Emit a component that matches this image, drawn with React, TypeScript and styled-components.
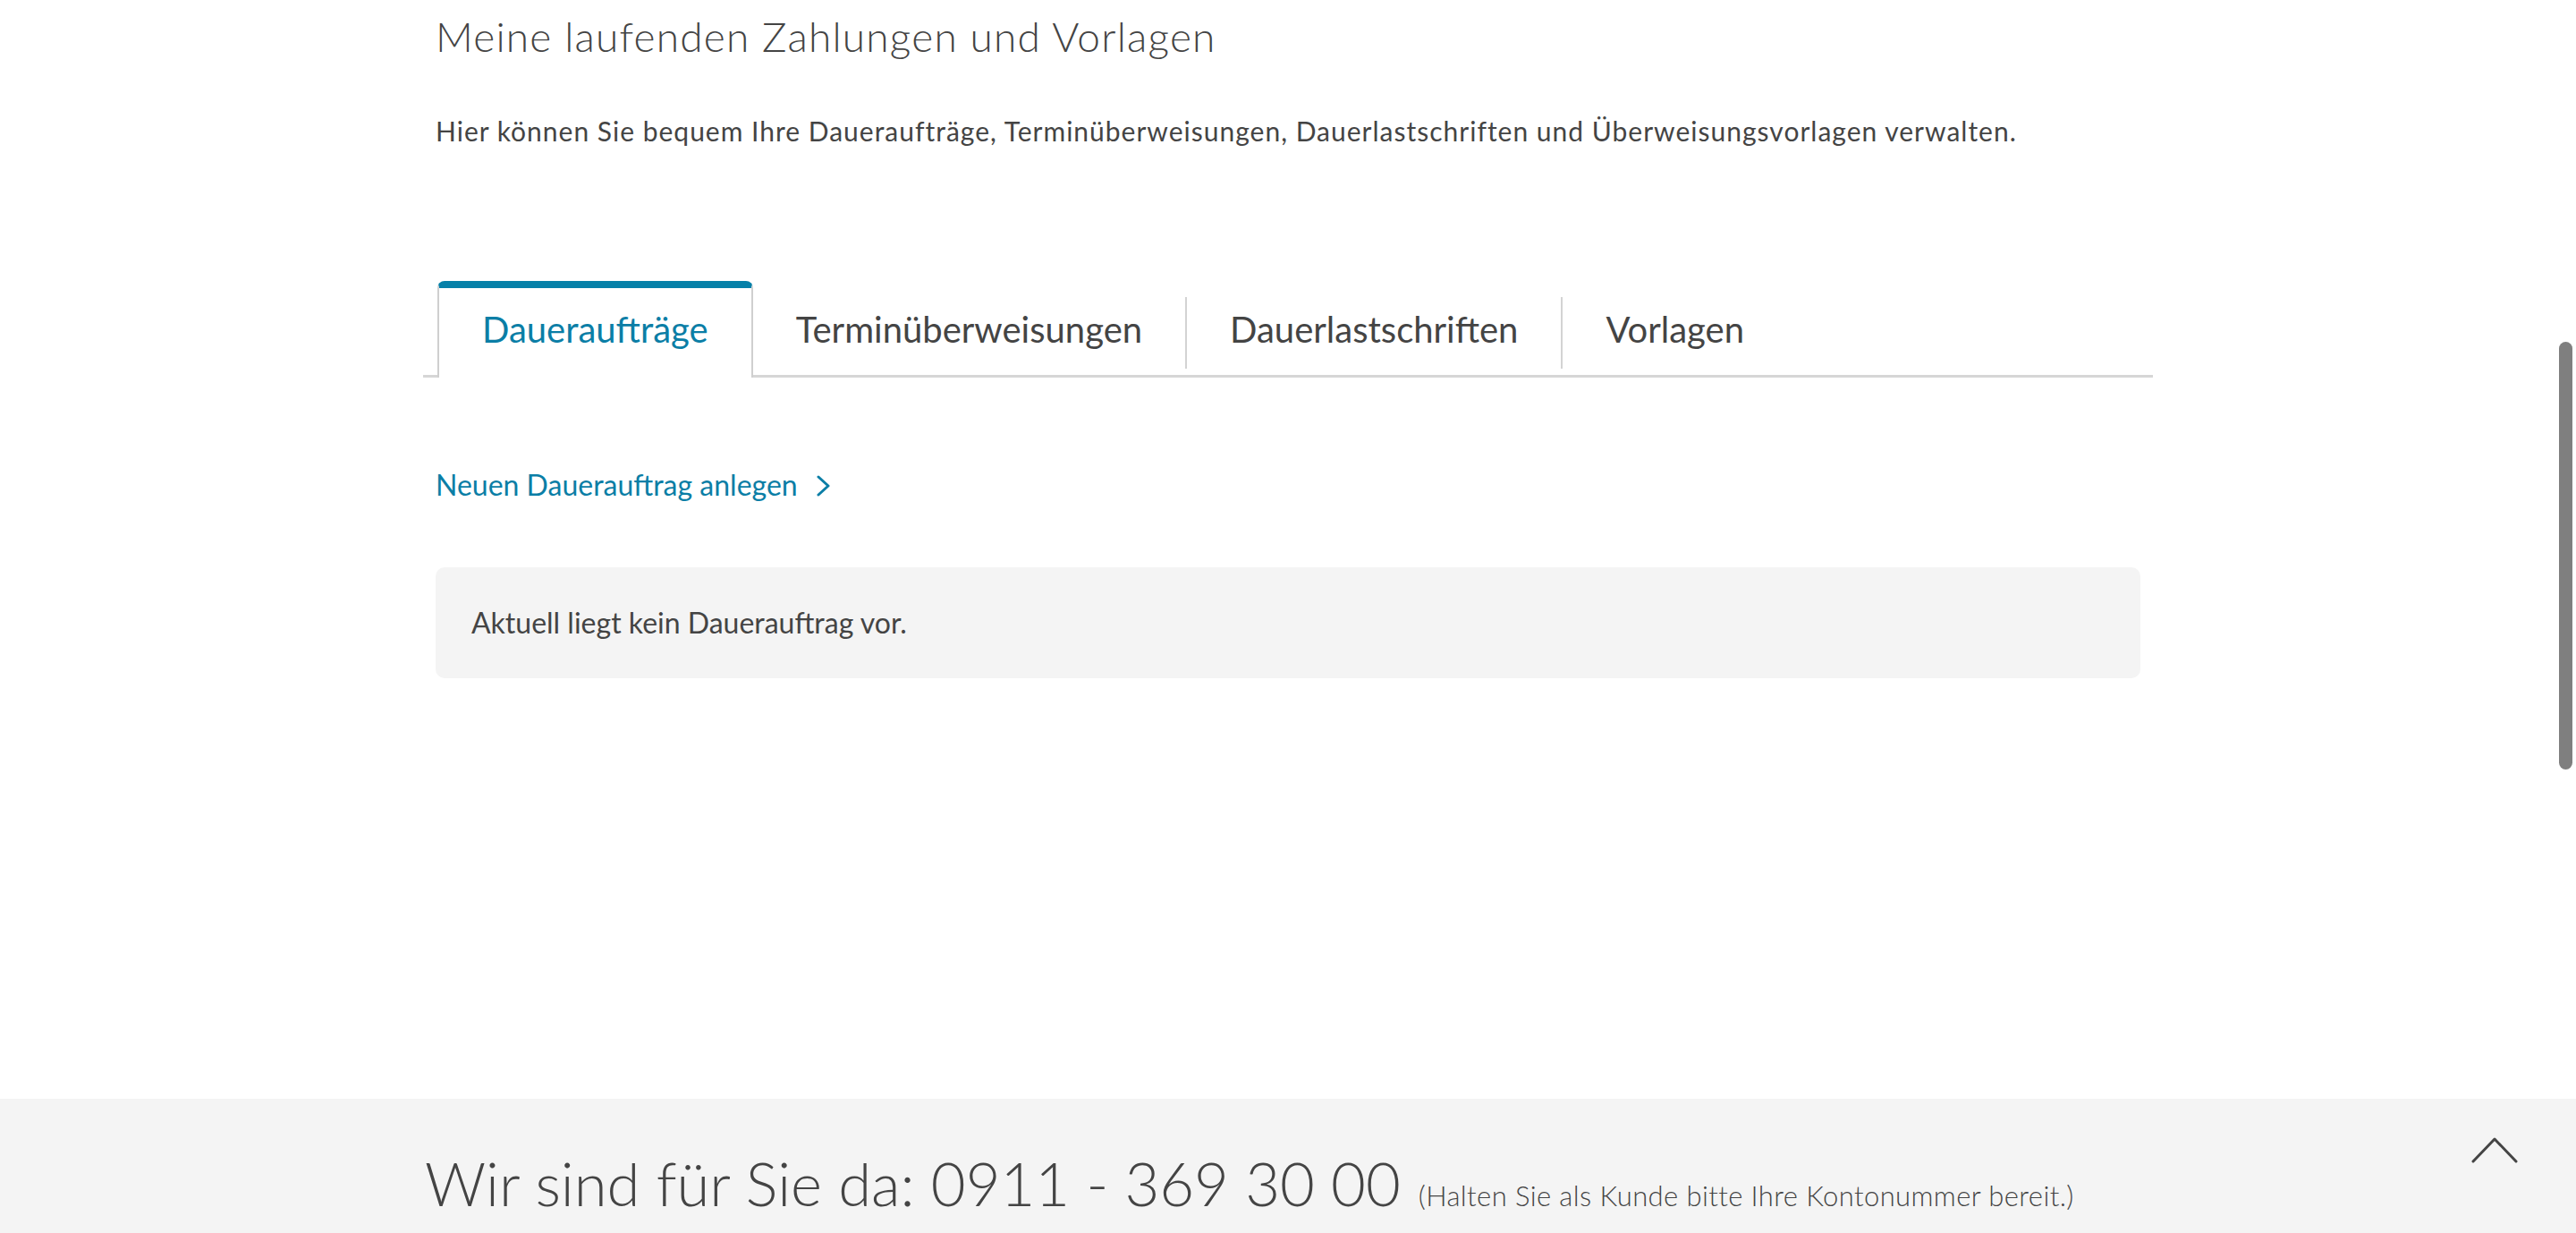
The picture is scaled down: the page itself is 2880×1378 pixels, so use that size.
import React, { useState } from "react";
import styled, { createGlobalStyle } from "styled-components";

const GlobalStyle = createGlobalStyle`
  html, body {
    margin: 0;
    padding: 0;
    background: #ffffff;
    overflow: hidden;
  }
  body {
    font-family: Lato, "Open Sans", "Liberation Sans", Arial, sans-serif;
    color: #444444;
  }
  *, *::before, *::after {
    box-sizing: border-box;
  }
`;

const Page = styled.div`
  display: flex;
  flex-direction: column;
  height: 1378px;
`;

const Main = styled.main`
  flex: 1;
`;

const Container = styled.div`
  width: 1934px;
  margin: 0 auto;
  padding: 0 14px;
`;

const Title = styled.h1`
  margin: 0;
  padding-top: 13px;
  font-size: 46px;
  font-weight: 300;
  line-height: 55px;
  letter-spacing: 1.2px;
  color: #444444;
`;

const Intro = styled.p`
  margin: 60px 0 0;
  font-size: 30px;
  line-height: 36px;
  font-weight: 400;
  letter-spacing: 1px;
`;

const TabList = styled.div`
  display: flex;
  align-items: flex-end;
  height: 108px;
  margin: 150px -14px 0;
  padding-left: 16px;
  border-bottom: 3px solid #d6d6d6;
`;

const Tab = styled.button<{ $active?: boolean }>`
  display: flex;
  align-items: flex-start;
  height: 108px;
  margin: 0 0 -3px;
  padding: 22px 48px 0;
  border: none;
  border-top: 8px solid ${(p) => (p.$active ? "#0580a8" : "transparent")};
  border-left: ${(p) => (p.$active ? "2px solid #cfcfcf" : "none")};
  border-right: ${(p) => (p.$active ? "2px solid #cfcfcf" : "none")};
  border-radius: 8px 8px 0 0;
  background: ${(p) => (p.$active ? "#ffffff" : "transparent")};
  color: ${(p) => (p.$active ? "#0b7ea6" : "#444444")};
  font-family: inherit;
  font-size: 40px;
  line-height: 48px;
  font-weight: 400;
  cursor: pointer;
  white-space: nowrap;
`;

const Divider = styled.span`
  display: block;
  width: 2px;
  height: 80px;
  margin-bottom: 7px;
  background: #d3d3d3;
`;

const LinkRow = styled.div`
  display: flex;
  margin-top: 101px;
`;

const CreateLink = styled.a`
  display: inline-flex;
  align-items: center;
  gap: 20px;
  font-size: 32px;
  line-height: 38px;
  color: #0b7ea6;
  text-decoration: none;
  cursor: pointer;

  svg {
    margin-top: 2px;
  }
`;

const EmptyBox = styled.div`
  display: flex;
  align-items: center;
  height: 124px;
  margin-top: 73px;
  padding: 0 40px;
  border-radius: 10px;
  background: #f4f4f4;
  font-size: 32px;
  line-height: 38px;
  color: #444444;
`;

const Footer = styled.footer`
  position: relative;
  height: 150px;
  background: #f4f4f4;
`;

const FooterInner = styled.div`
  width: 1934px;
  margin: 0 auto;
  padding: 54px 0 0 2px;
  white-space: nowrap;
`;

const Hotline = styled.span`
  font-size: 67px;
  line-height: 80px;
  font-weight: 300;
  color: #444444;
`;

const HotlineNote = styled.span`
  margin-left: 20px;
  font-size: 31px;
  font-weight: 300;
  letter-spacing: 0.4px;
  color: #444444;
`;

const ToTop = styled.button`
  position: absolute;
  top: 40px;
  right: 64px;
  width: 54px;
  height: 34px;
  padding: 0;
  border: none;
  background: transparent;
  color: #444444;
  cursor: pointer;
`;

const ScrollThumb = styled.div`
  position: fixed;
  top: 382px;
  right: 4px;
  width: 15px;
  height: 478px;
  border-radius: 8px;
  background: #7f7f7f;
`;

const tabs = ["Daueraufträge", "Terminüberweisungen", "Dauerlastschriften", "Vorlagen"];

export default function App() {
  const [active, setActive] = useState(0);
  return (
    <>
      <GlobalStyle />
      <Page>
        <Main>
          <Container>
            <Title>Meine laufenden Zahlungen und Vorlagen</Title>
            <Intro>
              Hier können Sie bequem Ihre Daueraufträge, Terminüberweisungen, Dauerlastschriften und
              Überweisungsvorlagen verwalten.
            </Intro>
            <TabList role="tablist">
              {tabs.map((t, i) => (
                <React.Fragment key={t}>
                  {i > 0 && i !== active && i - 1 !== active && <Divider />}
                  <Tab $active={i === active} role="tab" onClick={() => setActive(i)}>
                    {t}
                  </Tab>
                </React.Fragment>
              ))}
            </TabList>
            <LinkRow>
              <CreateLink>
                Neuen Dauerauftrag anlegen
                <svg width="18" height="24" viewBox="0 0 18 24" fill="none">
                  <polyline
                    points="3,2 14,12 3,22"
                    stroke="currentColor"
                    strokeWidth="3"
                    strokeLinecap="round"
                    strokeLinejoin="round"
                  />
                </svg>
              </CreateLink>
            </LinkRow>
            <EmptyBox>Aktuell liegt kein Dauerauftrag vor.</EmptyBox>
          </Container>
        </Main>
        <Footer>
          <FooterInner>
            <Hotline>Wir sind für Sie da: 0911 - 369 30 00</Hotline>
            <HotlineNote>(Halten Sie als Kunde bitte Ihre Kontonummer bereit.)</HotlineNote>
          </FooterInner>
          <ToTop aria-label="Nach oben">
            <svg width="54" height="34" viewBox="0 0 54 34" fill="none">
              <polyline
                points="3,30 27,5 51,30"
                stroke="currentColor"
                strokeWidth="3"
                strokeLinecap="round"
                strokeLinejoin="round"
              />
            </svg>
          </ToTop>
        </Footer>
        <ScrollThumb />
      </Page>
    </>
  );
}
